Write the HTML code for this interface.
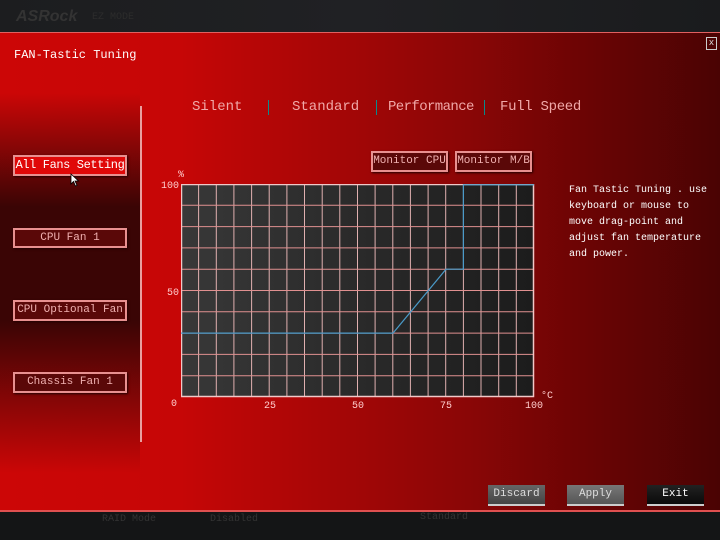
<!DOCTYPE html>
<html><head><style>
body{margin:0;width:720px;height:540px;overflow:hidden;background:#141516;font-family:"Liberation Mono","DejaVu Sans Mono",monospace;position:relative}
.top{position:absolute;left:0;top:0;width:720px;height:32px;background:linear-gradient(90deg,#1c1d1f,#202124 50%,#1a1b1d)}
.bot{position:absolute;left:0;top:512px;width:720px;height:28px;background:#141516}
.panel{position:absolute;left:0;top:32px;width:720px;height:480px;background:linear-gradient(90deg,#cc0606 0%,#c60606 25%,#a80606 45%,#8a0606 65%,#6a0404 82%,#4a0303 100%);border-top:1px solid #e06060;border-bottom:2px solid #e05050;box-sizing:border-box}
.side{position:absolute;left:0;top:60px;width:140px;height:380px;background:linear-gradient(180deg,rgba(150,0,0,0) 0%,#3a0505 30%,#3a0505 60%,rgba(160,0,0,0) 100%)}
.t{position:absolute;color:#fff;white-space:nowrap}
.btn{position:absolute;box-sizing:border-box;border:2px solid #e89090;background:#5a0808;color:#f0b0b0;font-size:11px;text-align:center;box-shadow:1px 1px 2px #200;white-space:nowrap}
.bb{position:absolute;box-sizing:border-box;height:21px;width:57px;text-align:center;font-size:11px;line-height:19px;color:#ddd;border-bottom:2px solid #ccc}
</style></head><body>
<div class="top"><span class="t" style="left:16px;top:8px;color:#333;font:bold italic 16px 'Liberation Sans',sans-serif">ASRock</span><span class="t" style="left:92px;top:12px;color:#2c2c2c;font-size:10px">EZ MODE</span></div>
<div class="bot"><span class="t" style="left:102px;top:2px;color:#333;font-size:10px">RAID Mode</span><span class="t" style="left:210px;top:2px;color:#333;font-size:10px">Disabled</span><span class="t" style="left:420px;top:0px;color:#333;font-size:10px">Standard</span></div>
<div class="panel">
<div class="side"></div>
<div class="t" style="left:14px;top:15px;font-size:12px">FAN-Tastic Tuning</div>
<div style="position:absolute;left:706px;top:4px;width:9px;height:11px;border:1px solid #ccc;color:#ddd;font-size:9px;line-height:11px;text-align:center">x</div>
<div style="position:absolute;left:140px;top:73px;width:2px;height:336px;background:#e8a0a0"></div>
<div class="t" style="left:192px;top:66px;font-size:14px;color:#f0a8a8">Silent</div>
<div class="t" style="left:292px;top:66px;font-size:14px;color:#f0a8a8">Standard</div>
<div class="t" style="left:388px;top:66px;font-size:14px;color:#f0a8a8;letter-spacing:-0.6px">Performance</div>
<div class="t" style="left:500px;top:66px;font-size:14px;color:#f0a8a8;letter-spacing:-0.3px">Full Speed</div>
<div style="position:absolute;left:268px;top:67px;width:1px;height:15px;background:#0a8a8a"></div>
<div style="position:absolute;left:376px;top:67px;width:1px;height:15px;background:#0a8a8a"></div>
<div style="position:absolute;left:484px;top:67px;width:1px;height:15px;background:#0a8a8a"></div>
<div class="btn" style="left:13px;top:122px;width:114px;height:21px;line-height:17px;background:#e00808;color:#fff;font-size:12px;letter-spacing:-0.4px">All Fans Setting</div>
<div class="btn" style="left:13px;top:195px;width:114px;height:20px;line-height:16px">CPU Fan 1</div>
<div class="btn" style="left:13px;top:267px;width:114px;height:21px;line-height:17px">CPU Optional Fan</div>
<div class="btn" style="left:13px;top:339px;width:114px;height:21px;line-height:17px">Chassis Fan 1</div>
<svg style="position:absolute;left:70px;top:140px" width="10" height="14"><path d="M1 1 L1 11 L3.5 8.5 L5.5 13 L7 12.3 L5 8 L8.5 8 Z" fill="#fff" stroke="#000" stroke-width=".8"/></svg>
<div class="btn" style="left:371px;top:118px;width:77px;height:21px;line-height:17px">Monitor CPU</div>
<div class="btn" style="left:455px;top:118px;width:77px;height:21px;line-height:17px">Monitor M/B</div>
<div class="t" style="left:569px;top:150px;font-size:10px;line-height:16px;color:#fff">Fan Tastic Tuning . use<br>keyboard or mouse to<br>move drag-point and<br>adjust fan temperature<br>and power.</div>
<div class="t" style="left:178px;top:137px;font-size:10px;color:#fcc">%</div>
<div class="t" style="left:161px;top:148px;font-size:10px;color:#fcc">100</div>
<div class="t" style="left:167px;top:255px;font-size:10px;color:#fcc">50</div>
<div class="t" style="left:171px;top:366px;font-size:10px;color:#fcc">0</div>
<div class="t" style="left:264px;top:368px;font-size:10px;color:#fcc">25</div>
<div class="t" style="left:352px;top:368px;font-size:10px;color:#fcc">50</div>
<div class="t" style="left:440px;top:368px;font-size:10px;color:#fcc">75</div>
<div class="t" style="left:525px;top:368px;font-size:10px;color:#fcc">100</div>
<div class="t" style="left:541px;top:358px;font-size:10px;color:#fcc">°C</div>
<svg style="position:absolute;left:181px;top:151px" width="354" height="214">
<defs><linearGradient id="g" x1="0" x2="1"><stop offset="0" stop-color="#383838"/><stop offset="1" stop-color="#1c1c1c"/></linearGradient></defs>
<rect x="0" y="0" width="353" height="213" fill="url(#g)"/>
<g stroke="#e09090" stroke-width="1">
<path d="M17.6 0V213M35.3 0V213M52.9 0V213M70.6 0V213M88.2 0V213M105.9 0V213M123.5 0V213M141.2 0V213M158.8 0V213M176.5 0V213M194.1 0V213M211.8 0V213M229.4 0V213M247.1 0V213M264.7 0V213M282.4 0V213M300 0V213M317.7 0V213M335.3 0V213" stroke="#e0b0b0"/>
<path d="M0 21.3H353M0 42.6H353M0 63.9H353M0 85.2H353M0 106.5H353M0 127.8H353M0 149.1H353M0 170.4H353M0 191.7H353"/>
</g>
<rect x="0.5" y="0.5" width="352" height="212" fill="none" stroke="#f0c8c8" stroke-width="1.5"/>
<path d="M0 149.1H212L265 85.2H282.4V0.8H353" fill="none" stroke="#4a9ac8" stroke-width="1.2"/>
</svg>
<div class="bb" style="left:488px;top:452px;background:linear-gradient(#666,#444)">Discard</div>
<div class="bb" style="left:567px;top:452px;background:linear-gradient(#777,#555)">Apply</div>
<div class="bb" style="left:647px;top:452px;background:linear-gradient(#222,#0a0a0a);color:#fff">Exit</div>
</div>
</body></html>
